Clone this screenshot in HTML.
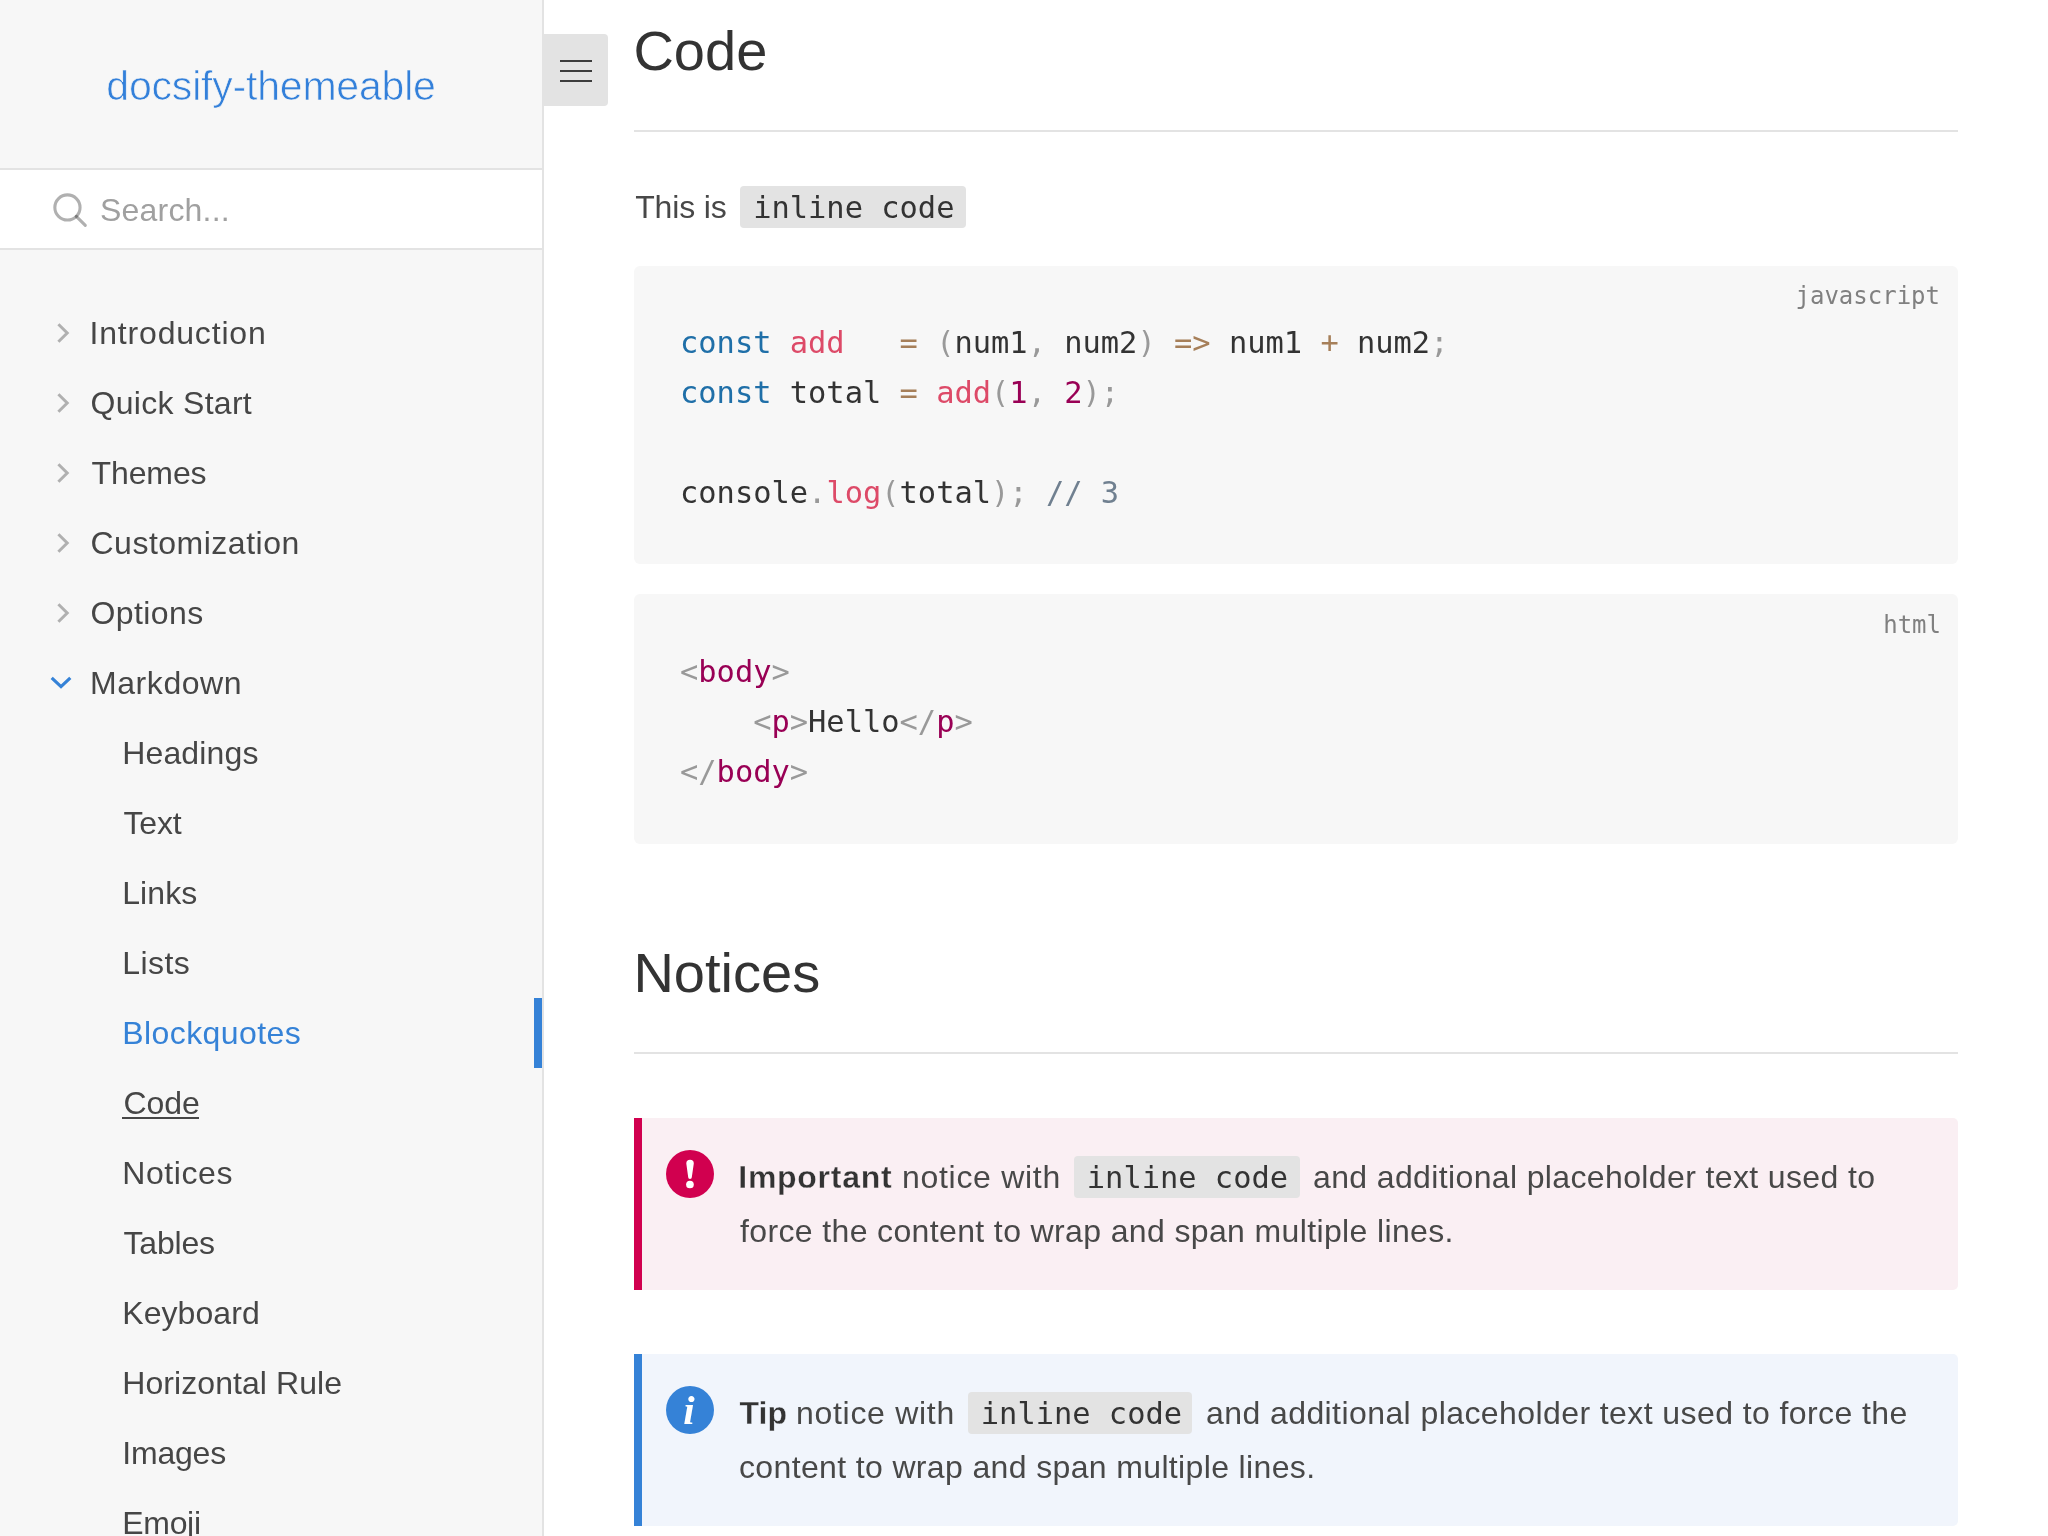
<!DOCTYPE html>
<html lang="en">
<head>
<meta charset="utf-8">
<title>docsify-themeable</title>
<style>
*{box-sizing:border-box;margin:0;padding:0}
html,body{width:2048px;height:1536px;overflow:hidden;background:#fff}
body{font-family:"Liberation Sans",sans-serif;color:#484848;position:relative;font-size:32px}
.sidebar{position:absolute;left:0;top:0;width:544px;height:1536px;background:#f7f7f7;border-right:2px solid #e3e3e3;overflow:hidden}
.app-name{position:absolute;left:0;top:0;width:542px;height:168px;text-align:center}
.app-name a{position:absolute;left:0;width:542px;top:60px;line-height:52px;font-size:41px;color:#3380da;text-decoration:none;font-weight:400;letter-spacing:-0.2px;-webkit-text-stroke:0.7px #f7f7f7}
.search{position:absolute;left:0;top:168px;width:542px;height:82px;background:#fff;border-top:2px solid #e3e3e3;border-bottom:2px solid #e3e3e3}
.search svg{position:absolute;left:50px;top:22px}
.search span{position:absolute;left:100px;top:20px;line-height:40px;font-size:32px;color:#a0a0a0;letter-spacing:0.2px}
.nav{position:absolute;left:0;top:298px;width:542px;list-style:none}
.nav li{position:relative;height:70px;line-height:70px;font-size:32px;color:#464646;white-space:nowrap}
.nav li span{position:absolute;left:91px;top:0}
.nav li.sub span{left:123px}
.nav li svg{position:absolute;left:50px;top:23px}
.nav li.active{color:#3582d7}
.nav li.active:after{content:"";position:absolute;right:0;top:0;width:8px;height:70px;background:#3582d7}
.nav li.hover:before{content:"";position:absolute;left:122px;top:49px;width:77.25px;height:2px;background:#464646}
.toggle{position:absolute;left:544px;top:34px;width:64px;height:72px;background:#e3e3e3;border-radius:0 4px 4px 0}
.toggle i{position:absolute;left:16px;width:32px;height:2px;background:#3c3c3c}
.content{position:absolute;left:634px;top:0;width:1324px}
h2{font-weight:400;font-size:56px;color:#333;line-height:70px;border-bottom:2px solid #e3e3e3;white-space:nowrap;text-indent:-0.6px}
p{font-size:32px;line-height:54px;color:#484848}
code.il{font-family:"DejaVu Sans Mono","Liberation Mono",monospace;font-size:30.4px;background:#e3e3e3;color:#333;border-radius:4px;padding:4px 12.2px;margin:0 4.5px;white-space:pre}
pre{position:relative;background:#f7f7f7;border-radius:6px;font-family:"DejaVu Sans Mono","Liberation Mono",monospace;font-size:30.4px;line-height:50px;color:#333;padding:51px 46px 0 46px;white-space:pre}
pre .lang{position:absolute;right:19px;top:14px;font-size:24px;line-height:30px;color:#808080}
.k{color:#1f6fa8}.f{color:#dd4a68}.o{color:#a67f59}.pn{color:#999}.n{color:#990055}.c{color:#708090}.t{color:#990055}
.notice{position:relative;border-left:8px solid #d1004f;background:#faeff3;border-radius:0 5px 5px 0;height:172px;padding:0}
.notice.tip{border-left-color:#3582d7;background:#f1f5fc}
.notice p{position:absolute;left:0;height:54px;line-height:54px;white-space:nowrap;width:100%}
.notice p.l1{top:32px}.notice p.l2{top:86px}
.notice p>*{position:absolute;top:0}
.notice code.il{top:6px;height:42px;line-height:43px;padding:0 0 0 12.8px;margin:0}
.notice b{color:#333;font-weight:700;-webkit-text-stroke:.3px #faeff3}
.notice.tip b{-webkit-text-stroke-color:#f1f5fc}
.notice svg{position:absolute;left:24px;top:32px}
.sidebar,.content{will-change:transform}
</style>
</head>
<body>
<div class="sidebar">
  <div class="app-name"><a>docsify-themeable</a></div>
  <div class="search">
    <svg width="40" height="40" viewBox="0 0 40 40" fill="none" stroke="#000" stroke-opacity=".31" stroke-width="3.1" stroke-linecap="round"><circle cx="17.45" cy="15.45" r="12.6"/><path d="M26.3 24.4 L35.3 33.3"/></svg>
    <span>Search...</span>
  </div>
  <ul class="nav">
    <li><svg width="24" height="24" viewBox="0 0 24 24" fill="none" stroke="#b0b0b0" stroke-width="3" stroke-linejoin="miter"><path d="M8.4 3.2 L17.2 12 L8.4 20.8"/></svg><span style="left:89.50px;letter-spacing:0.82px">Introduction</span></li>
    <li><svg width="24" height="24" viewBox="0 0 24 24" fill="none" stroke="#b0b0b0" stroke-width="3" stroke-linejoin="miter"><path d="M8.4 3.2 L17.2 12 L8.4 20.8"/></svg><span style="left:90.50px;letter-spacing:0.30px">Quick Start</span></li>
    <li><svg width="24" height="24" viewBox="0 0 24 24" fill="none" stroke="#b0b0b0" stroke-width="3" stroke-linejoin="miter"><path d="M8.4 3.2 L17.2 12 L8.4 20.8"/></svg><span style="left:91.50px;letter-spacing:-0.10px">Themes</span></li>
    <li><svg width="24" height="24" viewBox="0 0 24 24" fill="none" stroke="#b0b0b0" stroke-width="3" stroke-linejoin="miter"><path d="M8.4 3.2 L17.2 12 L8.4 20.8"/></svg><span style="left:90.50px;letter-spacing:0.50px">Customization</span></li>
    <li><svg width="24" height="24" viewBox="0 0 24 24" fill="none" stroke="#b0b0b0" stroke-width="3" stroke-linejoin="miter"><path d="M8.4 3.2 L17.2 12 L8.4 20.8"/></svg><span style="left:90.50px;letter-spacing:0.42px">Options</span></li>
    <li><svg width="24" height="24" viewBox="0 0 24 24" fill="none" stroke="#3582d7" stroke-width="3.2" stroke-linejoin="miter"><path d="M1.7 6.9 L11 15.6 L20.3 6.9"/></svg><span style="left:90.00px;letter-spacing:0.57px">Markdown</span></li>
    <li class="sub"><span style="left:122.25px;letter-spacing:0.14px">Headings</span></li>
    <li class="sub"><span style="left:123.50px;letter-spacing:-0.17px">Text</span></li>
    <li class="sub"><span style="left:122.25px;letter-spacing:0.06px">Links</span></li>
    <li class="sub"><span style="left:122.25px;letter-spacing:0.44px">Lists</span></li>
    <li class="sub active"><span style="left:122.25px;letter-spacing:0.42px">Blockquotes</span></li>
    <li class="sub hover"><span style="left:123.50px;letter-spacing:-0.05px">Code</span></li>
    <li class="sub"><span style="left:122.25px;letter-spacing:0.58px">Notices</span></li>
    <li class="sub"><span style="left:123.50px;letter-spacing:-0.20px">Tables</span></li>
    <li class="sub"><span style="left:122.25px;letter-spacing:0.07px">Keyboard</span></li>
    <li class="sub"><span style="left:122.25px;letter-spacing:0.07px">Horizontal Rule</span></li>
    <li class="sub"><span style="left:122.25px;letter-spacing:-0.20px">Images</span></li>
    <li class="sub"><span style="left:122.25px;letter-spacing:-0.31px">Emoji</span></li>
  </ul>
</div>
<div class="toggle"><i style="top:26px"></i><i style="top:36px"></i><i style="top:46px"></i></div>
<div class="content">
  <h2 style="margin-top:16px;height:116px;padding-top:0">Code</h2>
  <p style="margin-top:48px;position:relative;height:55px"><span style="position:absolute;left:1.2px;top:0;letter-spacing:-0.15px">This is</span><code class="il" style="position:absolute;left:106px;top:6px;width:226px;height:42px;line-height:43px;padding:0 0 0 13.2px;margin:0">inline code</code></p>
  <pre style="margin-top:31px;height:298px;padding-top:52px"><span class="lang" style="right:18px;top:15px">javascript</span><span class="k">const</span> <span class="f">add</span>   <span class="o">=</span> <span class="pn">(</span>num1<span class="pn">,</span> num2<span class="pn">)</span> <span class="o">=&gt;</span> num1 <span class="o">+</span> num2<span class="pn">;</span>
<span class="k">const</span> total <span class="o">=</span> <span class="f">add</span><span class="pn">(</span><span class="n">1</span><span class="pn">,</span> <span class="n">2</span><span class="pn">)</span><span class="pn">;</span>

console<span class="pn">.</span><span class="f">log</span><span class="pn">(</span>total<span class="pn">)</span><span class="pn">;</span> <span class="c">// 3</span></pre>
  <pre style="margin-top:30px;height:250px;padding-top:53px"><span class="lang" style="right:17px;top:15.6px">html</span><span class="pn">&lt;</span><span class="t">body</span><span class="pn">&gt;</span>
    <span class="pn">&lt;</span><span class="t">p</span><span class="pn">&gt;</span>Hello<span class="pn">&lt;/</span><span class="t">p</span><span class="pn">&gt;</span>
<span class="pn">&lt;/</span><span class="t">body</span><span class="pn">&gt;</span></pre>
  <h2 style="margin-top:94px;height:116px">Notices</h2>
  <div class="notice" style="margin-top:64px">
    <svg width="48" height="48" viewBox="0 0 48 48"><circle cx="24" cy="24" r="24" fill="#d1004f"/><path d="M20.3 13.6 a3.75 3.75 0 0 1 7.5 0 L25.8 27.2 a1.8 1.8 0 0 1 -3.6 0 Z" fill="#fff"/><circle cx="23.95" cy="34.5" r="3.85" fill="#fff"/></svg>
    <p class="l1"><b id="n1a" style="left:96.3px;letter-spacing:0.72px">Important</b> <span id="n1b" style="left:260px;letter-spacing:0.700px">notice with</span> <code class="il" id="n1c" style="left:432px;width:226px">inline code</code> <span id="n1d" style="left:671px;letter-spacing:0.368px">and additional placeholder text used to</span></p>
    <p class="l2"><span id="n1e" style="left:98px;letter-spacing:0.367px">force the content to wrap and span multiple lines.</span></p>
  </div>
  <div class="notice tip" style="margin-top:64px">
    <svg width="48" height="48" viewBox="0 0 48 48"><circle cx="24" cy="24" r="24" fill="#3582d7"/><text x="23" y="38.2" text-anchor="middle" font-family="Liberation Serif,serif" font-style="italic" font-weight="700" font-size="41" fill="#fff">i</text></svg>
    <p class="l1"><b id="n2a" style="left:97.5px;letter-spacing:0.1px">Tip</b> <span id="n2b" style="left:154px;letter-spacing:0.700px">notice with</span> <code class="il" id="n2c" style="left:326px;width:224px">inline code</code> <span id="n2d" style="left:564px;letter-spacing:0.417px">and additional placeholder text used to force the</span></p>
    <p class="l2"><span id="n2e" style="left:97px;letter-spacing:0.359px">content to wrap and span multiple lines.</span></p>
  </div>
</div>
</body>
</html>
